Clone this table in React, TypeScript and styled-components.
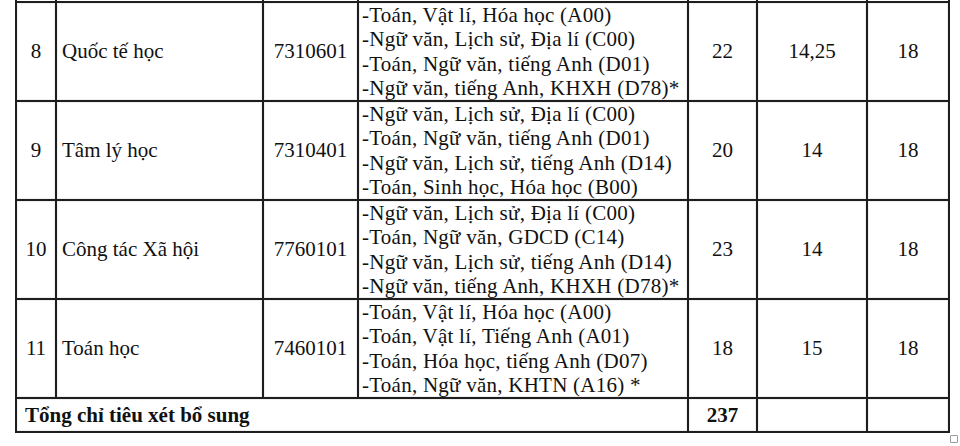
import React from "react";
import styled, { createGlobalStyle } from "styled-components";

const GlobalStyle = createGlobalStyle`
  html, body {
    margin: 0;
    padding: 0;
    background: #ffffff;
  }
  body {
    font-family: "Liberation Serif", "Times New Roman", serif;
    color: #111111;
  }
`;

type RowType = {
  no: number;
  name: string;
  code: string;
  groups: string[];
  quota: number;
  score: string;
  minScore: number;
};

const rows: RowType[] = [
  {
    no: 8,
    name: "Quốc tế học",
    code: "7310601",
    groups: [
      "-Toán, Vật lí, Hóa học (A00)",
      "-Ngữ văn, Lịch sử, Địa lí (C00)",
      "-Toán, Ngữ văn, tiếng Anh (D01)",
      "-Ngữ văn, tiếng Anh, KHXH (D78)*",
    ],
    quota: 22,
    score: "14,25",
    minScore: 18,
  },
  {
    no: 9,
    name: "Tâm lý học",
    code: "7310401",
    groups: [
      "-Ngữ văn, Lịch sử, Địa lí (C00)",
      "-Toán, Ngữ văn, tiếng Anh (D01)",
      "-Ngữ văn, Lịch sử, tiếng Anh (D14)",
      "-Toán, Sinh học, Hóa học (B00)",
    ],
    quota: 20,
    score: "14",
    minScore: 18,
  },
  {
    no: 10,
    name: "Công tác Xã hội",
    code: "7760101",
    groups: [
      "-Ngữ văn, Lịch sử, Địa lí (C00)",
      "-Toán, Ngữ văn, GDCD (C14)",
      "-Ngữ văn, Lịch sử, tiếng Anh (D14)",
      "-Ngữ văn, tiếng Anh, KHXH (D78)*",
    ],
    quota: 23,
    score: "14",
    minScore: 18,
  },
  {
    no: 11,
    name: "Toán học",
    code: "7460101",
    groups: [
      "-Toán, Vật lí, Hóa học (A00)",
      "-Toán, Vật lí, Tiếng Anh (A01)",
      "-Toán, Hóa học, tiếng Anh (D07)",
      "-Toán, Ngữ văn, KHTN (A16) *",
    ],
    quota: 18,
    score: "15",
    minScore: 18,
  },
];

const Page = styled.div`
  position: relative;
  width: 960px;
  height: 446px;
  overflow: hidden;
`;

const Table = styled.table`
  margin-left: 15px;
  border-collapse: collapse;
  table-layout: fixed;
  width: 934px;
  font-size: 21px;
`;

const Cell = styled.td<{ $align?: "left" | "center"; $bold?: boolean }>`
  border: 2px solid #1e1e1e;
  padding: 0 5px;
  text-align: ${(p) => p.$align || "center"};
  vertical-align: middle;
  font-weight: ${(p) => (p.$bold ? 700 : 400)};
  line-height: 24.25px;
  white-space: nowrap;
  box-shadow: inset 0 0 0 1px #efefef;
`;

const CutCell = styled.td`
  border: 2px solid #1e1e1e;
  border-top: none;
  height: 1px;
  padding: 0;
`;

const GroupCell = styled(Cell)`
  padding: 0 3px;
  height: 97px;
  letter-spacing: 0.25px;
`;

const TotalCell = styled(Cell)`
  padding: 0 8px;
  height: 32px;
`;

const Handle = styled.div`
  position: absolute;
  left: 950px;
  top: 435px;
  width: 6px;
  height: 6px;
  border: 1px solid #9a9a9a;
  border-radius: 1px;
`;

const widths = [40, 207, 95, 330, 69, 110, 82];

export default function App(): JSX.Element {
  return (
    <Page>
      <GlobalStyle />
      <Table>
        <colgroup>
          {widths.map((w, i) => (
            <col key={i} style={{ width: w }} />
          ))}
        </colgroup>
        <tbody>
          <tr>
            {widths.map((_, i) => (
              <CutCell key={i} />
            ))}
          </tr>
          {rows.map((r) => (
            <tr key={r.no}>
              <Cell>{r.no}</Cell>
              <Cell $align="left">{r.name}</Cell>
              <Cell>{r.code}</Cell>
              <GroupCell $align="left">
                {r.groups.map((g) => (
                  <div key={g}>{g}</div>
                ))}
              </GroupCell>
              <Cell>{r.quota}</Cell>
              <Cell>{r.score}</Cell>
              <Cell>{r.minScore}</Cell>
            </tr>
          ))}
          <tr>
            <TotalCell colSpan={4} $align="left" $bold>
              Tổng chỉ tiêu xét bổ sung
            </TotalCell>
            <TotalCell $bold>237</TotalCell>
            <TotalCell />
            <TotalCell />
          </tr>
        </tbody>
      </Table>
      <Handle />
    </Page>
  );
}
